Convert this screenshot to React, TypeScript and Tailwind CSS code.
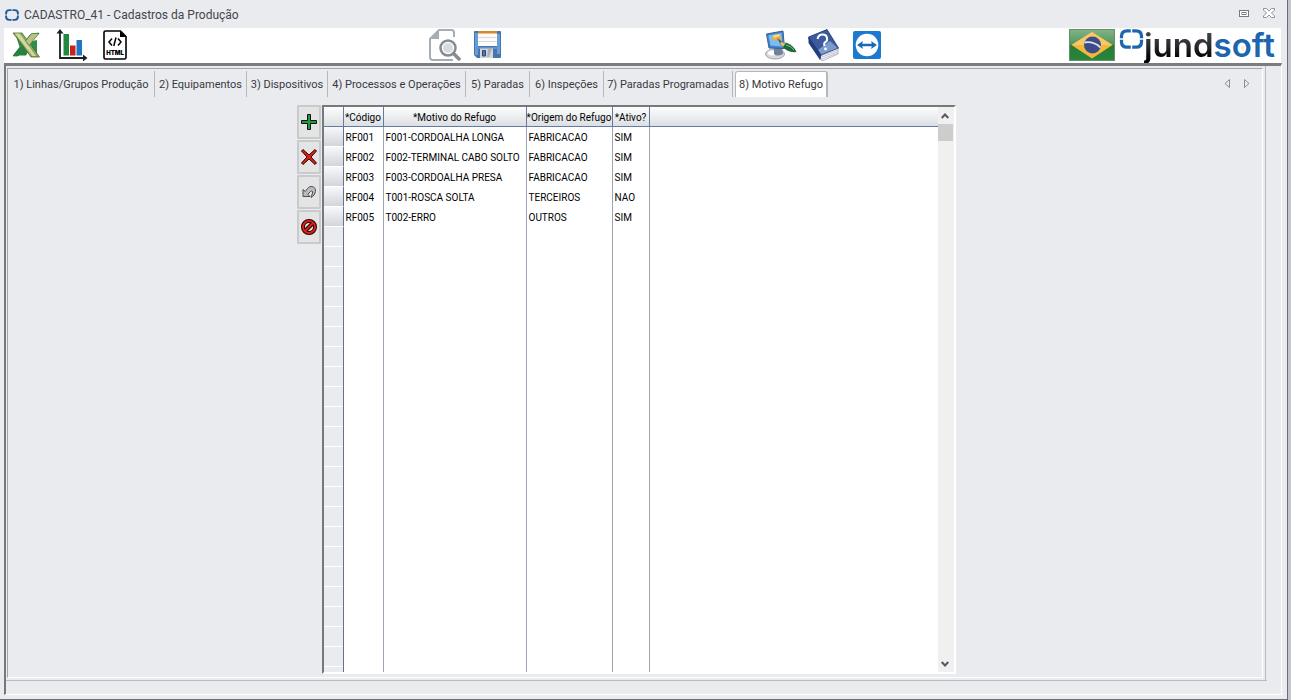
import { useState } from "react";

const tabs = [
  { label: "1) Linhas/Grupos Produção", width: "w-[147px]" },
  { label: "2) Equipamentos", width: "w-[92px]" },
  { label: "3) Dispositivos", width: "w-[81px]" },
  { label: "4) Processos e Operações", width: "w-[138px]" },
  { label: "5) Paradas", width: "w-[64px]" },
  { label: "6) Inspeções", width: "w-[74px]" },
  { label: "7) Paradas Programadas", width: "w-[129px]" },
  { label: "8) Motivo Refugo", width: "w-[93px]" },
];

const rows = [
  ["RF001", "F001-CORDOALHA LONGA", "FABRICACAO", "SIM"],
  ["RF002", "F002-TERMINAL CABO SOLTO", "FABRICACAO", "SIM"],
  ["RF003", "F003-CORDOALHA PRESA", "FABRICACAO", "SIM"],
  ["RF004", "T001-ROSCA SOLTA", "TERCEIROS", "NAO"],
  ["RF005", "T002-ERRO", "OUTROS", "SIM"],
];

function RingMark({ className, color }: { className: string; color: string }) {
  return (
    <svg className={className} viewBox="0 0 26 22" fill="none" stroke={color} strokeWidth="3.600" aria-hidden="true">
      <path d="M12.200 2H8Q2 2 2 8v2.200M13.800 2H18q6 0 6 6v2.200M2 11.800V14q0 6 6 6h4.200M24 11.800V14q0 6-6 6h-4.200" />
    </svg>
  );
}

function ExcelIcon() {
  return (
    <svg className="h-[26px] w-7" viewBox="0 0 28 26" aria-hidden="true">
      <path d="M27 1L17 12 6 24H1L10 12.500 19 2z" fill="#2d8a47" stroke="#1e6b35" strokeWidth="0.7" />
      <path d="M18 9.500L25 8v15l-3 .5z" fill="#2f8e4a" />
      <path d="M1 23.500l9-11 6 7.500-2 3.500z" fill="#26823f" />
      <path d="M4 4l8 9-4 3.500z" fill="#2d8a47" />
      <path d="M1 1h9l17.500 24H19L10 12.500z" fill="#8fa860" stroke="#4c6b39" strokeWidth="0.8" />
      <path d="M3 1.500h4.500l16.500 22.500h-3.500z" fill="#d3d99a" />
      <path d="M27 1.500h-7.500L13.500 9l3.500 4.500z" fill="#b5c383" stroke="#4c6b39" strokeWidth="0.600" />
    </svg>
  );
}

function ChartIcon() {
  return (
    <svg className="h-8 w-8" viewBox="0 0 32 32" aria-hidden="true">
      <path d="M4 3v26h26" fill="none" stroke="#1b1f22" strokeWidth="1.800" />
      <path d="M4 0L.5 4.500h7zM31.500 29L27 25.500v7z" fill="#1b1f22" />
      <rect x="7.500" y="5" width="5.500" height="21.500" fill="#1f8a3d" />
      <rect x="14" y="16.500" width="5.500" height="10" fill="#c4241a" />
      <rect x="20.500" y="11" width="5.500" height="15.500" fill="#1f74c4" />
    </svg>
  );
}

function HtmlIcon() {
  return (
    <svg className="h-[30px] w-6" viewBox="0 0 24 30" aria-hidden="true">
      <path d="M1 2.500Q1 1 2.500 1h15L23 6.500v21q0 1.500-1.500 1.500h-19Q1 29 1 27.500z" fill="#fff" stroke="#000" strokeWidth="1.600" />
      <path d="M17 1v6h6z" fill="#000" />
      <path d="M9 8.500L6 12l3 3.500M15 8.500l3 3.500-3 3.500M13 7.500l-2.200 8.500" fill="none" stroke="#000" strokeWidth="1.500" />
      <text x="12" y="25" textAnchor="middle" fontFamily="Inter, 'Liberation Sans', sans-serif" fontWeight="900" fontSize="6">HTML</text>
    </svg>
  );
}

function PreviewIcon() {
  return (
    <svg className="h-8 w-8" viewBox="0 0 32 32" fill="none" aria-hidden="true">
      <path d="M25 8V3.500Q25 1 22.500 1H10L1 10v18q0 3 3 3h20" stroke="#a5adb5" strokeWidth="2" />
      <path d="M10 1v9H1z" fill="#a5adb5" />
      <circle cx="19" cy="19" r="7.500" fill="#fff" stroke="#868b90" strokeWidth="2.500" />
      <circle cx="19" cy="19" r="5" fill="#d7dce3" />
      <path d="M24.500 24.500l5.500 5.500" stroke="#868b90" strokeWidth="3.500" strokeLinecap="round" />
    </svg>
  );
}

function SaveIcon() {
  return (
    <svg className="h-[27px] w-[27px]" viewBox="0 0 27 27" aria-hidden="true">
      <path d="M1 0h25q1 0 1 1v25q0 1-1 1H3l-3-3V1q0-1 1-1z" fill="#4674ad" />
      <path d="M1 2h3v22H1zM23 3h3v20h-3z" fill="#679fd6" />
      <path d="M4 1h19v14H4z" fill="#fbfbfb" />
      <path d="M4 0h19v2.500H4z" fill="#dc8526" />
      <path d="M4.500 6.500h18M4.500 10.500h18" stroke="#d3d8dc" />
      <path d="M2 16h22v2H2z" fill="#5e92cb" />
      <path d="M6 17.500h13V27H6z" fill="#d5d6d8" />
      <path d="M8.500 19.500h3V25h-3z" fill="#4c79bb" stroke="#29477e" />
      <path d="M14 18h4l-3 8h-2z" fill="#aeb0b4" />
    </svg>
  );
}

function PaintIcon() {
  return (
    <svg className="h-8 w-8" viewBox="0 0 32 32" aria-hidden="true">
      <ellipse cx="10" cy="25" rx="9.500" ry="5" fill="#d7d9dc" stroke="#9da2a9" />
      <ellipse cx="7" cy="24" rx="4" ry="2.500" fill="#fff" />
      <path d="M9 17h8l1 8q-6 3-9 0z" fill="#70819a" />
      <path d="M1.500 5L18 2l1.500 17.500L4 19z" fill="#3f83d2" stroke="#3f5f8c" />
      <path d="M3.500 6.500L16.500 4l1 13.500-12-1z" fill="#7abdf3" />
      <path d="M7 8l8-2.500 1 4-8 2.500z" fill="#f4a83d" />
      <path d="M8 6.500l6-1.500 1 2-6 2z" fill="#ffd87a" />
      <path d="M12 9l6 4-2 3z" fill="#805425" />
      <path d="M16 12.500l5.500 2-2.500 4-4-3z" fill="#d2c087" stroke="#7c7145" strokeWidth=".5" />
      <path d="M21 13.500q8 3 10.500 9.500-9 1-13.500-5z" fill="#1b6a38" />
      <path d="M21 16q5 1 8 5" stroke="#7ec27a" fill="none" />
    </svg>
  );
}

function HelpBookIcon() {
  return (
    <svg className="h-8 w-8" viewBox="0 0 32 32" aria-hidden="true">
      <path d="M1 9L20 .5 31.500 20 14 31z" fill="#2e4686" />
      <path d="M11 23.500L31 19v6L15 32z" fill="#f4f5f8" stroke="#88909f" strokeWidth=".6" />
      <path d="M14 26.500L31 21M14.500 28L31 22.800M15 29.800l16-5.500" stroke="#aeb5c1" strokeWidth=".7" />
      <path d="M1.500 8L20 .5l11.500 18.500L14 26z" fill="#3c5a9e" stroke="#263c78" strokeWidth=".8" />
      <path d="M23 12l7.500 7L14 25.500 11 21z" fill="#8fb1db" opacity=".75" />
      <path d="M1.500 8v6L13 31l1.500-5z" fill="#253d7e" />
      <path d="M10.500 10q1-4.500 5-4.500t4.500 3.500-1.500 4-1 4" fill="none" stroke="#fff" strokeWidth="2" />
      <circle cx="18.500" cy="20" r="1.400" fill="#fff" />
    </svg>
  );
}

function RemoteIcon() {
  return (
    <svg className="h-7 w-7" viewBox="0 0 28 28" aria-hidden="true">
      <rect width="28" height="28" rx="2" fill="#1c79cf" />
      <circle cx="14" cy="14" r="11.300" fill="#fff" />
      <path d="M4 14l6-4-.8 2.800h9.600L18 10l6 4-6 4 .8-2.800H9.200l.8 2.800z" fill="#1769b8" />
    </svg>
  );
}

function BrazilFlag() {
  return (
    <svg className="h-8 w-[46px]" viewBox="0 0 46 32" role="img" aria-label="Brasil">
      <defs>
        <linearGradient id="flag" x1="0" y1="0" x2="0" y2="1">
          <stop offset="0" stopColor="#82b488" />
          <stop offset=".48" stopColor="#53945d" />
          <stop offset=".5" stopColor="#277b35" />
          <stop offset="1" stopColor="#28863b" />
        </linearGradient>
      </defs>
      <rect x=".5" y=".5" width="45" height="31" fill="url(#flag)" stroke="#64906a" />
      <path d="M23 3l20.500 13L23 29.500 2.500 16z" fill="#f4b63d" />
      <path d="M23 3l20.500 13h-41z" fill="#f8c865" />
      <circle cx="23.500" cy="16" r="8.500" fill="#3d4c87" />
      <path d="M15.500 13.500q9-1.500 16 5" stroke="#dfe5ee" strokeWidth="1.800" fill="none" />
    </svg>
  );
}

function AddIcon() {
  return (
    <svg className="h-4 w-4" viewBox="0 0 16 16" aria-hidden="true">
      <path d="M6.500.5h3v6h6v3h-6v6h-3v-6h-6v-3h6z" fill="#1f9a42" stroke="#111" />
    </svg>
  );
}

function DeleteIcon() {
  return (
    <svg className="h-4 w-4" viewBox="0 0 16 16" aria-hidden="true">
      <path d="M2 .5L8 6 14 .5l1.500 1.500L10 8l5.500 6-1.500 1.500L8 10l-6 5.500L.5 14 6 8 .5 2z" fill="#d52315" stroke="#300" />
    </svg>
  );
}

function UndoIcon() {
  return (
    <svg className="h-[14px] w-[14px]" viewBox="0 0 14 14" aria-hidden="true">
      <path d="M1 4.500v7h7L5.800 9.200l2.700-2.700q2.500-1.500 2 1.500L9 12.500q4-2 4.500-6T10 1.500Q7.500 1 5.500 3.500L3.300 6.500z" fill="#b9bbbe" stroke="#4c4e51" />
    </svg>
  );
}

function CancelIcon() {
  return (
    <svg className="h-4 w-4" viewBox="0 0 16 16" fill="none" aria-hidden="true">
      <circle cx="8" cy="8" r="6" stroke="#200" strokeWidth="4" />
      <path d="M4 12l8-8" stroke="#200" strokeWidth="4" />
      <circle cx="8" cy="8" r="6" stroke="#d52315" strokeWidth="2" />
      <path d="M4 12l8-8" stroke="#d52315" strokeWidth="2" />
    </svg>
  );
}

const actions = [
  { name: "Incluir", icon: <AddIcon /> },
  { name: "Excluir", icon: <DeleteIcon /> },
  { name: "Desfazer", icon: <UndoIcon /> },
  { name: "Cancelar", icon: <CancelIcon /> },
];

function ToolButton({ name, className = "", children }: { name: string; className?: string; children: React.ReactNode }) {
  return (
    <button type="button" aria-label={name} className={`flex shrink-0 items-center ${className}`}>
      {children}
    </button>
  );
}

function TitleBar() {
  return (
    <header className="flex h-7 shrink-0 items-center pt-0.5 pr-3 pl-[5px]">
      <RingMark className="h-3 w-[14px]" color="#1d5c9e" />
      <h1 className="ml-[5px] font-['Roboto',sans-serif] text-[12px] text-[#44464b]">CADASTRO_41 - Cadastros da Produção</h1>
      <div className="ml-auto flex items-center gap-[14px] pb-1">
        <button type="button" aria-label="Restaurar">
          <svg className="h-[7px] w-[10px]" viewBox="0 0 10 7" fill="#fff" stroke="#77797e">
            <rect x=".5" y=".5" width="9" height="6" />
            <rect x="3" y="2.500" width="4" height="2" />
          </svg>
        </button>
        <button type="button" aria-label="Fechar">
          <svg className="h-[10px] w-[12px]" viewBox="0 0 12 10" fill="#fff" stroke="#85878c" strokeWidth=".9">
            <path d="M.5.5h3L6 3 8.500.5h3v1.500L8.500 5l3 3v1.500h-3L6 7 3.500 9.500h-3V8l3-3-3-3z" />
          </svg>
        </button>
      </div>
    </header>
  );
}

function Toolbar() {
  return (
    <div className="mr-1.5 ml-1 flex h-[35px] shrink-0 items-center bg-white pb-0.5 pl-2">
      <ToolButton name="Exportar Excel"><ExcelIcon /></ToolButton>
      <ToolButton name="Gráfico" className="ml-4"><ChartIcon /></ToolButton>
      <ToolButton name="Exportar HTML" className="ml-[15px]"><HtmlIcon /></ToolButton>
      <ToolButton name="Visualizar" className="ml-[302px]"><PreviewIcon /></ToolButton>
      <ToolButton name="Salvar" className="ml-[13px]"><SaveIcon /></ToolButton>
      <ToolButton name="Aparência" className="ml-[264px]"><PaintIcon /></ToolButton>
      <ToolButton name="Ajuda" className="ml-[10px]"><HelpBookIcon /></ToolButton>
      <ToolButton name="Acesso remoto" className="ml-[14px]"><RemoteIcon /></ToolButton>
      <div className="ml-auto flex items-center pr-1.5">
        <BrazilFlag />
        <RingMark className="ml-1 h-5 w-[25px] self-start" color="#1d66ad" />
        <span className="font-['Inter',sans-serif] text-[33px] leading-8 font-semibold text-[#1d66ad]">
          <span className="bg-linear-to-b from-[#50555a] via-[#2b2e31] to-black bg-clip-text text-transparent">jund</span>soft
        </span>
      </div>
    </div>
  );
}

function TabStrip({ active, onSelect }: { active: number; onSelect: (index: number) => void }) {
  return (
    <div className="flex shrink-0 items-start pt-0.5 pr-3">
      <div role="tablist" className="flex font-['Roboto',sans-serif] text-[11px] text-[#37393e]">
        {tabs.map((tab, index) => (
          <button
            key={tab.label}
            type="button"
            role="tab"
            aria-selected={index === active}
            onClick={() => onSelect(index)}
            className={`h-[26px] shrink-0 pt-0.5 text-center whitespace-nowrap ${tab.width} ${
              index === active
                ? "ml-0.5 rounded-t-[3px] border-t border-r-2 border-l border-[#b5b7ba] bg-white"
                : "border-r border-[#b5b7ba]"
            }`}
          >
            {tab.label}
          </button>
        ))}
      </div>
      <div className="ml-auto flex gap-3 pt-2">
        <button type="button" aria-label="Aba anterior">
          <svg className="h-[9px] w-[7px]" viewBox="0 0 7 9" fill="none" stroke="#8b8d91"><path d="M5.500.5v8l-4.500-4z" /></svg>
        </button>
        <button type="button" aria-label="Próxima aba">
          <svg className="h-[9px] w-[7px]" viewBox="0 0 7 9" fill="none" stroke="#8b8d91"><path d="M1.500.5v8l4.500-4z" /></svg>
        </button>
      </div>
    </div>
  );
}

const headCell = "h-5 border-r border-b border-r-[#647b9f] border-b-[#647b9f] bg-linear-to-b from-[#fdfdfd] to-[#dcdfe3] p-0 pt-0.5 font-normal whitespace-nowrap";
const bodyCell = "h-5 border-r border-[#9ba6b4] p-0 pt-0.5 pl-0.5 whitespace-nowrap";

function Grid() {
  return (
    <div className="flex w-[634px] border-2 border-t-[#76787b] border-r-white border-b-white border-l-[#76787b] bg-white">
      <div className="min-w-0 flex-1">
        <table className="h-full w-full table-fixed border-separate border-spacing-0 font-['Roboto',sans-serif] text-[10px] leading-4 text-black">
          <colgroup>
            <col className="w-5" />
            <col className="w-10" />
            <col className="w-[143px]" />
            <col className="w-[86px]" />
            <col className="w-[37px]" />
            <col />
          </colgroup>
          <thead>
            <tr className="h-5">
              <th className={headCell} aria-label="Seleção" />
              <th className={headCell}>*Código</th>
              <th className={headCell}>*Motivo do Refugo</th>
              <th className={headCell}>*Origem do Refugo</th>
              <th className={headCell}>*Ativo?</th>
              <td className="h-5 border-b border-[#647b9f] bg-linear-to-b from-[#fdfdfd] to-[#dcdfe3] p-0" />
            </tr>
          </thead>
          <tbody>
            {rows.map((row) => (
              <tr key={row[0]} className="h-5">
                <td className="h-5 border-r border-b border-r-[#65728f] border-b-white bg-linear-to-b from-[#f8f8fa] to-[#d3d5db] p-0" />
                {row.map((value, index) => (
                  <td key={index} className={bodyCell}>{value}</td>
                ))}
                <td className="p-0" />
              </tr>
            ))}
            <tr className="h-full">
              <td className="border-r border-[#65728f] bg-[#eaebef] bg-[repeating-linear-gradient(to_bottom,transparent_0px,transparent_19px,white_19px,white_20px)] p-0" />
              <td className="border-r border-[#9ba6b4] p-0" />
              <td className="border-r border-[#9ba6b4] p-0" />
              <td className="border-r border-[#9ba6b4] p-0" />
              <td className="border-r border-[#9ba6b4] p-0" />
              <td className="p-0" />
            </tr>
          </tbody>
        </table>
      </div>
      <div className="flex w-4 shrink-0 flex-col bg-[#f0f0f0]">
        <button type="button" aria-label="Rolar para cima" className="flex h-[17px] w-[15px] items-center justify-center">
          <svg className="h-[6px] w-2" viewBox="0 0 8 6" fill="none" stroke="#55575b" strokeWidth="2"><path d="M.7 5L4 1.500 7.300 5" /></svg>
        </button>
        <div className="h-[17px] w-[15px] bg-[#cdcdcd]" />
        <button type="button" aria-label="Rolar para baixo" className="mt-auto flex h-[17px] w-[15px] items-center justify-center">
          <svg className="h-[6px] w-2" viewBox="0 0 8 6" fill="none" stroke="#55575b" strokeWidth="2"><path d="M.7 1L4 4.500 7.300 1" /></svg>
        </button>
      </div>
    </div>
  );
}

export default function App() {
  const [active, setActive] = useState(7);
  return (
    <div className="flex h-screen bg-[#c3c6cc]">
      <div className="mr-[3px] flex min-w-0 flex-1 flex-col border-r border-b border-[#686c74] bg-[#eaebef]">
        <TitleBar />
        <Toolbar />
        <main className="mr-[5px] mb-1 ml-1 flex min-h-0 flex-1 flex-col border-t-[3px] border-r border-b border-l-2 border-t-[#7b7c80] border-r-white border-b-white border-l-[#77787b]">
          <div className="mr-[15px] flex min-h-0 flex-1 border-r border-[#b9babd]">
            <div className="mt-0.5 mr-0.5 mb-0.5 ml-px flex min-w-0 flex-1 flex-col border border-t-[#a4a5a8] border-r-white border-b-white border-l-[#a4a5a8]">
              <TabStrip active={active} onSelect={setActive} />
              <div className="mt-2 mb-[3px] flex min-h-0 flex-1 justify-center pr-[18px]">
                <div className="mr-px flex shrink-0 flex-col gap-px">
                  {actions.map((action) => (
                    <button
                      key={action.name}
                      type="button"
                      aria-label={action.name}
                      className="flex h-[34px] w-6 items-center justify-center rounded-[1px] border-2 border-[#c9cacc] bg-[#e4e4e5]"
                    >
                      {action.icon}
                    </button>
                  ))}
                </div>
                <Grid />
              </div>
            </div>
          </div>
          <footer className="mr-[14px] h-[14px] shrink-0 border-t border-[#b9babd]" />
        </main>
      </div>
    </div>
  );
}
